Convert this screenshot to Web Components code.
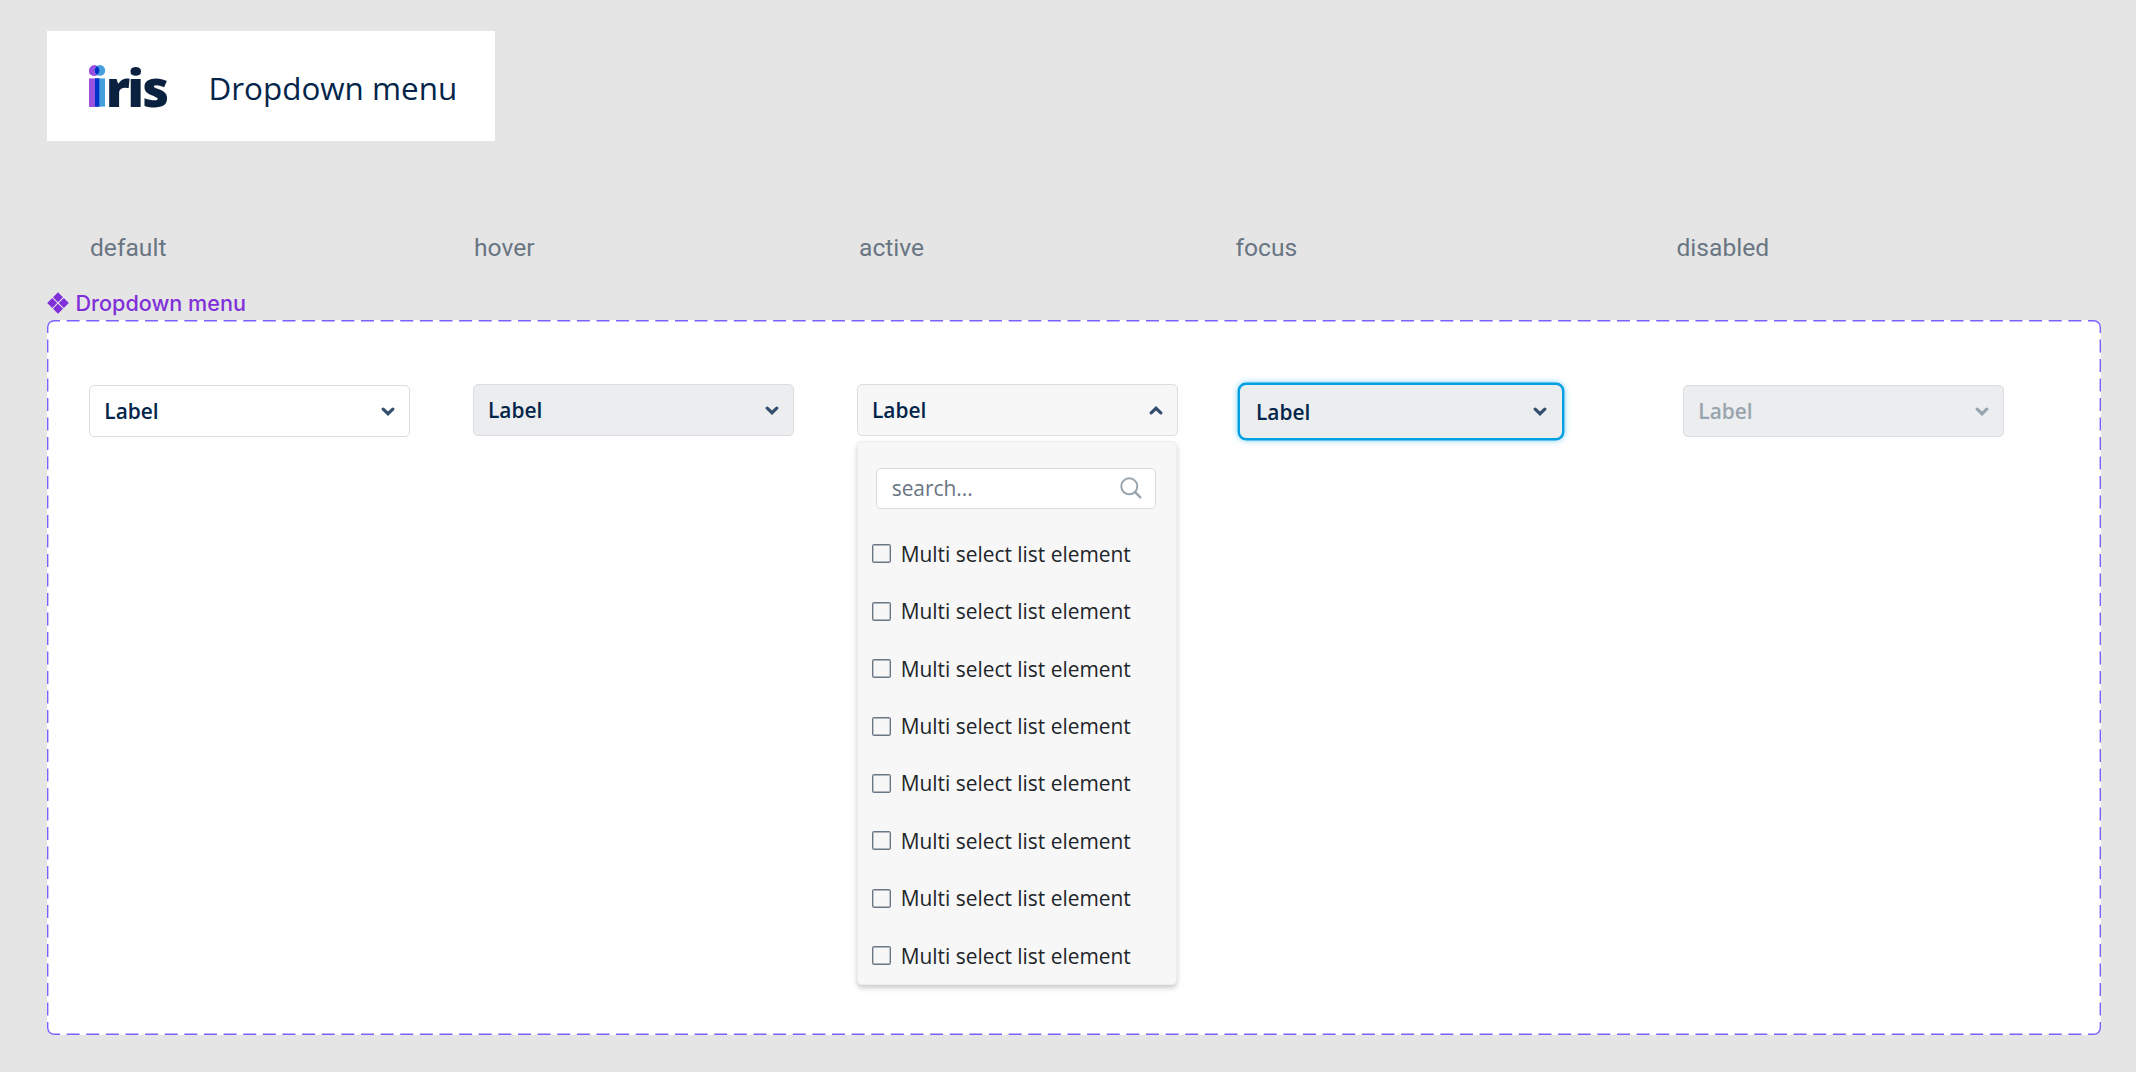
<!DOCTYPE html>
<html lang="en">
<head>
<meta charset="utf-8">
<title>iris - Dropdown menu</title>
<style>
  html, body {
    margin: 0;
    height: 100%;
    overflow: hidden;
    background: #e5e5e5;
  }

  body {
    font-family: "Open Sans", "Noto Sans", sans-serif;
  }
</style>
</head>
<body>
<iris-sheet>
  <iris-title slot="title">Dropdown menu</iris-title>
  <state-label slot="states">default</state-label>
  <state-label slot="states">hover</state-label>
  <state-label slot="states">active</state-label>
  <state-label slot="states">focus</state-label>
  <state-label slot="states">disabled</state-label>
  <component-frame name="Dropdown menu">
    <iris-dropdown>Label</iris-dropdown>
    <iris-dropdown state="hover">Label</iris-dropdown>
    <iris-dropdown state="active" open>
      Label
      <search-field slot="menu">search...</search-field>
      <check-item slot="menu">Multi select list element</check-item>
      <check-item slot="menu">Multi select list element</check-item>
      <check-item slot="menu">Multi select list element</check-item>
      <check-item slot="menu">Multi select list element</check-item>
      <check-item slot="menu">Multi select list element</check-item>
      <check-item slot="menu">Multi select list element</check-item>
      <check-item slot="menu">Multi select list element</check-item>
      <check-item slot="menu">Multi select list element</check-item>
    </iris-dropdown>
    <iris-dropdown state="focus">Label</iris-dropdown>
    <iris-dropdown state="disabled">Label</iris-dropdown>
  </component-frame>
</iris-sheet>

<script>
class IrisSheet extends HTMLElement {
  constructor() {
    super()

    this.attachShadow({ mode: 'open' }).innerHTML = `
      <style>
        :host {
          display: flex;
          flex-direction: column;
          align-items: flex-start;
          box-sizing: border-box;
          padding: 31px 35px 0 47px;
        }

        .states {
          display: grid;
          grid-template-columns: 384px 385px 376.5px 441px auto;
          margin-top: 90px;
          padding-left: 43px;
        }
      </style>
      <slot name="title"></slot>
      <div class="states"><slot name="states"></slot></div>
      <slot></slot>
    `
  }
}

class IrisTitle extends HTMLElement {
  constructor() {
    super()

    this.attachShadow({ mode: 'open' }).innerHTML = `
      <style>
        :host {
          display: flex;
          align-items: flex-start;
          box-sizing: border-box;
          width: 448px;
          height: 110px;
          padding: 17px 0 0 40px;
          background: #fff;
          color: #032549;
        }

        svg {
          flex: none;
          width: 84px;
          height: 76px;
        }

        text {
          font: 800 52px "Open Sans", sans-serif;
          fill: #0a2240;
        }

        tspan {
          fill: #9b51e0;
        }

        span {
          margin: 18px 0 0 37.5px;
          font-size: 31.4px;
          line-height: 44px;
          white-space: nowrap;
        }
      </style>
      <svg viewBox="0 -14 84 76">
        <text x="-1 18.7 40.3 55.3" y="44.6"><tspan>i</tspan>ris</text>
        <rect x="2" y="16.4" width="10.3" height="28.2" fill="#9b51e0"/>
        <circle cx="7.2" cy="8.4" r="5.3" fill="#9b51e0"/>
        <rect x="8" y="16.4" width="10" height="28.2" fill="#459fdf"/>
        <circle cx="12.9" cy="8.4" r="5.3" fill="#459fdf"/>
        <rect x="8" y="16.4" width="4.3" height="28.2" fill="#0032c8"/>
        <path d="M10.05 4A5.3 5.3 0 0 1 10.05 12.8A5.3 5.3 0 0 1 10.05 4Z" fill="#0032c8"/>
      </svg>
      <span><slot></slot></span>
    `
  }
}

class StateLabel extends HTMLElement {
  constructor() {
    super()

    this.attachShadow({ mode: 'open' }).innerHTML = `
      <style>
        :host {
          display: block;
          color: #697582;
          font: 24.6px/34px Roboto, sans-serif;
        }
      </style>
      <slot></slot>
    `
  }
}

class ComponentFrame extends HTMLElement {
  constructor() {
    super()

    this.attachShadow({ mode: 'open' }).innerHTML = `
      <style>
        :host {
          display: block;
          margin-top: 21px;
        }

        header {
          display: flex;
          align-items: center;
          height: 33px;
          color: #7f30d9;
          font: 500 21.6px/33px Inter, sans-serif;
        }

        header span {
          padding-top: 1px;
        }

        header svg {
          width: 22px;
          height: 22px;
          margin: 0 6.5px 0 0;
          fill: currentColor;
        }

        .frame {
          position: relative;
          display: grid;
          grid-template-columns: 383.7px 384px 381.3px 445px 321px;
          align-items: start;
          box-sizing: border-box;
          width: 2054px;
          height: 715px;
          margin-top: 1px;
          padding: 62px 0 0 42px;
          border-radius: 7px;
          background: #fff;
        }

        .outline {
          position: absolute;
          inset: 0;
          width: 2054px;
          height: 715px;
          fill: none;
          stroke: #7b61ff;
          stroke-width: 1.4;
        }
      </style>
      <header>
        <svg viewBox="0 0 22 22">
          <path d="M11 .2l5 5-5 5-5-5zM11 11.8l5 5-5 5-5-5zM5.2 6l5 5-5 5-5-5zM16.8 6l5 5-5 5-5-5z"/>
        </svg>
        <span></span>
      </header>
      <div class="frame">
        <svg class="outline" viewBox="0 0 2054 715">
          <path d="M.7 13V7.2A6.5 6.5 0 0 1 7.2 .7H13M2041 .7H2046.8A6.5 6.5 0 0 1 2053.3 7.2V13M2053.3 702V707.8A6.5 6.5 0 0 1 2046.8 714.3H2041M13 714.3H7.2A6.5 6.5 0 0 1 .7 707.8V702"/>
          <path stroke-dasharray="13 6.625" d="M19.6 .7H2034.5M19.6 714.3H2034.5"/>
          <path stroke-dasharray="13 6.5" d="M.7 19.5V695.6M2053.3 19.5V695.6"/>
        </svg>
        <slot></slot>
      </div>
    `
  }

  connectedCallback() {
    this.shadowRoot.querySelector('span').textContent = this.getAttribute('name')
  }
}

class IrisDropdown extends HTMLElement {
  constructor() {
    super()

    this.attachShadow({ mode: 'open' }).innerHTML = `
      <style>
        :host {
          display: block;
          width: 321px;
          margin-top: 3.3px;
          color: #032549;
          --chevron: #344f6e;
        }

        .toggle {
          display: flex;
          align-items: center;
          justify-content: space-between;
          box-sizing: border-box;
          height: 52px;
          padding: 0 14.2px 0 14.3px;
          border: 1px solid #dadee2;
          border-radius: 5px;
          background: #fff;
          font-size: 20.9px;
          font-weight: 600;
          line-height: 28px;
        }

        .toggle svg {
          width: 14px;
          height: 9px;
          fill: none;
          stroke: var(--chevron);
          stroke-width: 3.2;
          stroke-linecap: round;
        }

        .menu {
          display: none;
          box-sizing: border-box;
          width: 320px;
          height: 544px;
          margin-top: 5px;
          padding: 25.6px 14px 0;
          border: 1px solid #eeeeef;
          border-radius: 5px;
          background: #f7f7f7;
          box-shadow: 0 3px 4px rgba(0, 0, 0, 0.16), 0 3px 10px rgba(0, 0, 0, 0.06);
        }

        :host([state="hover"]),
        :host([state="active"]) {
          margin-top: 2px;
        }

        :host([state="hover"]) .toggle {
          background: #ebedef;
        }

        :host([state="active"]) .toggle {
          background: #f7f7f7;
        }

        :host([state="focus"]) {
          width: 326px;
          margin-top: 1px;
        }

        :host([state="focus"]) .toggle {
          height: 57px;
          padding: 0 15.2px 0 16px;
          border: 2.6px solid #00a0e3;
          border-radius: 8px;
          background: #ebedef;
          box-shadow: 0 0 0 0.4px #00a0e3, 0 0 6px rgba(0, 160, 227, 0.6);
        }

        :host([state="disabled"]) {
          color: #98a4ae;
          --chevron: #98a4ae;
        }

        :host([state="disabled"]) .toggle {
          background: #ebedef;
        }

        :host([open]) .toggle svg {
          transform: rotate(180deg);
        }

        :host([open]) .menu {
          display: block;
        }
      </style>
      <div class="toggle">
        <span><slot></slot></span>
        <svg viewBox="0 0 14 9"><path d="M2.2 2.2L7 6.7L11.8 2.2"/></svg>
      </div>
      <div class="menu"><slot name="menu"></slot></div>
    `
  }
}

class SearchField extends HTMLElement {
  constructor() {
    super()

    this.attachShadow({ mode: 'open' }).innerHTML = `
      <style>
        :host {
          display: flex;
          align-items: center;
          justify-content: space-between;
          box-sizing: border-box;
          width: 280.6px;
          height: 41.4px;
          margin: 0 0 16px 4px;
          padding: 0 13px 0 15px;
          border: 1px solid #d8dce1;
          border-radius: 5px;
          background: #fff;
          color: #697582;
          font-size: 20.9px;
          line-height: 28px;
        }

        svg {
          width: 22px;
          height: 22px;
          fill: none;
          stroke: #98a4ae;
          stroke-width: 2;
          stroke-linecap: round;
        }
      </style>
      <span><slot></slot></span>
      <svg viewBox="0 0 22 22">
        <circle cx="9.3" cy="9.3" r="8"/>
        <path stroke-width="2.4" d="M15.2 15.2L20.3 20.3"/>
      </svg>
    `
  }
}

class CheckItem extends HTMLElement {
  constructor() {
    super()

    this.attachShadow({ mode: 'open' }).innerHTML = `
      <style>
        :host {
          display: flex;
          align-items: center;
          height: 57.45px;
          color: #212529;
          font-size: 20.9px;
          line-height: 28px;
          white-space: nowrap;
        }

        i {
          box-sizing: border-box;
          width: 19px;
          height: 19px;
          margin-right: 10px;
          border: 1px solid #6a7684;
          border-radius: 1.5px;
          box-shadow: inset 0 0 0 0.4px #6a7684;
        }
      </style>
      <i></i>
      <span><slot></slot></span>
    `
  }
}

window.customElements.define('iris-sheet', IrisSheet)
window.customElements.define('iris-title', IrisTitle)
window.customElements.define('state-label', StateLabel)
window.customElements.define('component-frame', ComponentFrame)
window.customElements.define('iris-dropdown', IrisDropdown)
window.customElements.define('search-field', SearchField)
window.customElements.define('check-item', CheckItem)
</script>
</body>
</html>
